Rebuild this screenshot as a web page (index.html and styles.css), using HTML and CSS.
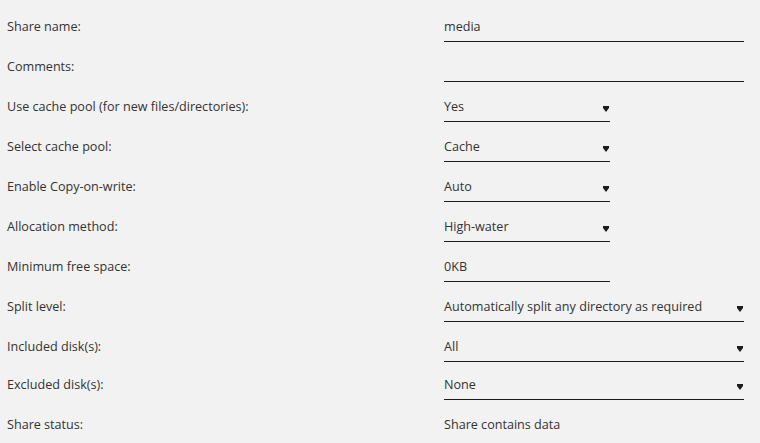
FILE: index.html
```html
<!DOCTYPE html>
<html lang="en">
<head>
  <meta charset="UTF-8">
  <title>Share Settings</title>
  <link rel="stylesheet" href="styles.css">
</head>
<body>
  <div class="form">
    <div class="row">
      <div class="label">Share name:</div>
      <div class="field wide">media</div>
    </div>
    <div class="row">
      <div class="label">Comments:</div>
      <div class="field wide"></div>
    </div>
    <div class="row">
      <div class="label">Use cache pool (for new files/directories):</div>
      <div class="field short select">Yes<span class="arrow"></span></div>
    </div>
    <div class="row">
      <div class="label">Select cache pool:</div>
      <div class="field short select">Cache<span class="arrow"></span></div>
    </div>
    <div class="row">
      <div class="label">Enable Copy-on-write:</div>
      <div class="field short select">Auto<span class="arrow"></span></div>
    </div>
    <div class="row">
      <div class="label">Allocation method:</div>
      <div class="field short select">High-water<span class="arrow"></span></div>
    </div>
    <div class="row">
      <div class="label">Minimum free space:</div>
      <div class="field short">0KB</div>
    </div>
    <div class="row">
      <div class="label">Split level:</div>
      <div class="field wide select">Automatically split any directory as required<span class="arrow"></span></div>
    </div>
    <div class="row tight">
      <div class="label">Included disk(s):</div>
      <div class="field wide select">All<span class="arrow"></span></div>
    </div>
    <div class="row">
      <div class="label">Excluded disk(s):</div>
      <div class="field wide select">None<span class="arrow"></span></div>
    </div>
    <div class="row">
      <div class="label">Share status:</div>
      <div class="value">Share contains data</div>
    </div>
  </div>
</body>
</html>
```

FILE: styles.css
```css
body {
  margin: 0;
  background-color: #f2f2f2;
  color: #333;
  font-family: "Open Sans", sans-serif;
  font-size: 12.6px;
}
.form {
  padding: 15px 0 0 7px;
}
.row {
  display: flex;
  align-items: flex-start;
  height: 40px;
}
.row.tight {
  height: 38px;
}
.label {
  width: 437px;
  line-height: 24px;
}
.field {
  position: relative;
  box-sizing: border-box;
  height: 27px;
  line-height: 24px;
  border-bottom: 1px solid #1c1c1c;
}
.wide {
  width: 300px;
}
.short {
  width: 166px;
}
.arrow {
  position: absolute;
  right: 1px;
  top: 13px;
  width: 0;
  height: 0;
  border-left: 3px solid transparent;
  border-right: 3px solid transparent;
  border-top: 4px solid #1c1c1c;
}
.arrow::before {
  content: "";
  position: absolute;
  left: -3px;
  top: -6px;
  width: 6px;
  height: 2px;
  background-color: #1c1c1c;
}
.value {
  line-height: 24px;
}
```
